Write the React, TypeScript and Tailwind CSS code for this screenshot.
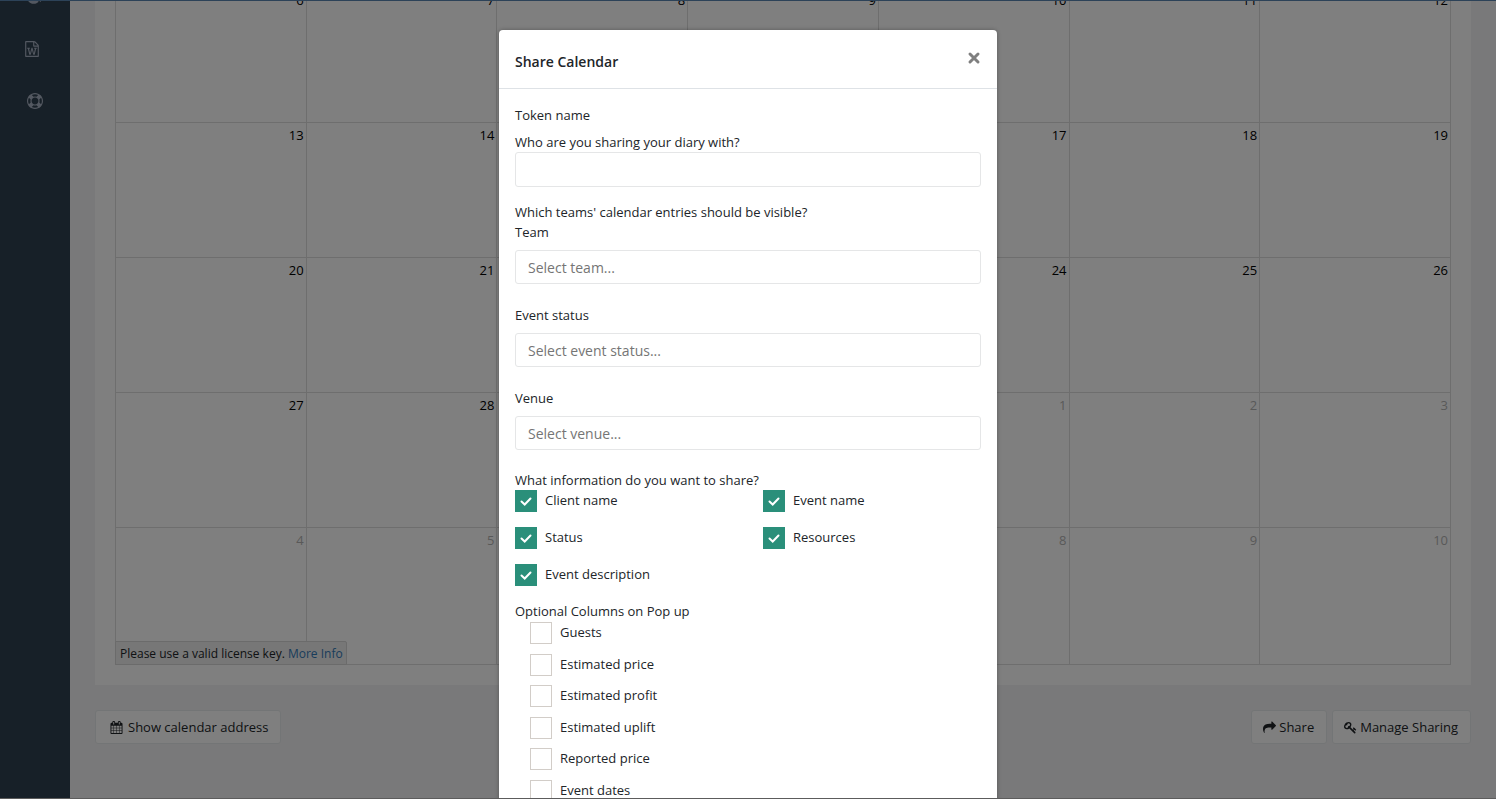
import { useState } from "react";
import type { ReactNode } from "react";

const ICONS = {
  fileWord:
    "M1596 380q28 28 48 76t20 88v1152q0 40-28 68t-68 28h-1344q-40 0-68-28t-28-68v-1600q0-40 28-68t68-28h896q40 0 88 20t76 48zm-444-244v376h376q-10-29-22-41l-313-313q-12-12-41-22zm384 1528v-1024h-416q-40 0-68-28t-28-68v-416h-768v1536h1280zm-1175-896v107h70l164 661h159l128-485q7-20 10-46 2-16 2-24h4l3 24q1 3 3.5 20t5.5 26l128 485h159l164-661h70v-107h-300v107h90l-99 438q-5 20-7 46l-2 21h-4l-3-21q-1-5-4-21t-5-25l-144-545h-114l-144 545q-2 9-4.5 24.5t-3.5 21.5l-4 21h-4l-2-21q-2-26-7-46l-99-438h90v-107h-300z",
  lifeRing:
    "M896 0q182 0 348 71t286 191 191 286 71 348-71 348-191 286-286 191-348 71-348-71-286-191-191-286-71-348 71-348 191-286 286-191 348-71zm0 128q-190 0-361 90l194 194q82-28 167-28t167 28l194-194q-171-90-361-90zm-678 1129l194-194q-28-82-28-167t28-167l-194-194q-90 171-90 361t90 361zm678 407q190 0 361-90l-194-194q-82 28-167 28t-167-28l-194 194q171 90 361 90zm0-384q159 0 271.5-112.5t112.5-271.5-112.5-271.5-271.5-112.5-271.5 112.5-112.5 271.5 112.5 271.5 271.5 112.5zm484-217l194 194q90-171 90-361t-90-361l-194 194q28 82 28 167t-28 167z",
  pieChart:
    "M768 890l546 546q-106 108-247.500 168t-298.500 60q-209 0-385.500-103t-279.500-279.500-103-385.500 103-385.500 279.500-279.500 385.500-103v762zm187 6h773q0 157-60 298.500t-168 247.500zm709-128h-768v-768q209 0 385.500 103t279.500 279.500 103 385.500z",
  calendar:
    "M192 1664h288v-288h-288v288zm352 0h320v-288h-320v288zm-352-352h288v-320h-288v320zm352 0h320v-320h-320v320zm-352-384h288v-288h-288v288zm736 736h320v-288h-320v288zm-384-736h320v-288h-320v288zm768 736h288v-288h-288v288zm-384-352h320v-320h-320v320zm-352-864v-288q0-13-9.5-22.5t-22.5-9.5h-64q-13 0-22.5 9.5t-9.5 22.5v288q0 13 9.5 22.5t22.5 9.5h64q13 0 22.5-9.5t9.5-22.5zm736 864h288v-320h-288v320zm-384-384h320v-288h-320v288zm384 0h288v-288h-288v288zm32-480v-288q0-13-9.5-22.5t-22.5-9.5h-64q-13 0-22.5 9.5t-9.5 22.5v288q0 13 9.5 22.5t22.5 9.5h64q13 0 22.5-9.5t9.5-22.5zm384-64v1280q0 52-38 90t-90 38h-1408q-52 0-90-38t-38-90v-1280q0-52 38-90t90-38h128v-96q0-66 47-113t113-47h64q66 0 113 47t47 113v96h384v-96q0-66 47-113t113-47h64q66 0 113 47t47 113v96h128q52 0 90 38t38 90z",
  share:
    "M1792 640q0 26-19 45l-512 512q-19 19-45 19t-45-19-19-45v-256h-224q-98 0-175.5 6t-154 21.500-133 42.500-105.500 69.500-80 101-48.500 138.500-17.500 181q0 55 5 123 0 6 2.500 23.500t2.500 26.500q0 15-8.500 25t-23.500 10q-16 0-28-17-7-9-13-22t-13.500-30-10.500-24q-127-285-127-451 0-199 53-333 162-403 875-403h224v-256q0-26 19-45t45-19 45 19l512 512q19 19 19 45z",
  key: "M832 512q0-80-56-136t-136-56-136 56-56 136q0 42 19 83-41-19-83-19-80 0-136 56t-56 136 56 136 136 56 136-56 56-136q0-42-19-83 41 19 83 19 80 0 136-56t56-136zm851 704q0 17-49 66t-66 49q-9 0-28.500-16t-36.500-33-38.500-40-24.500-26l-96 96 220 220q28 28 28 68 0 42-39 81t-81 39q-40 0-68-28l-671-671q-176 131-365 131-163 0-265.500-102.500t-102.500-265.500q0-160 95-313t248-248 313-95q163 0 265.500 102.500t102.500 265.500q0 189-131 365l355 355 96-96q-3-3-26-24.500t-40-38.500-33-36.500-16-28.500q0-17 49-66t66-49q13 0 23 10 6 6 46 44.500t82 79.500 86.500 86 73 78 28.500 41z",
};

function Icon({ name, className }: { name: keyof typeof ICONS; className: string }) {
  return (
    <svg aria-hidden viewBox="0 0 1792 1792" fill="currentColor" className={className}>
      <path d={ICONS[name]} />
    </svg>
  );
}

type Day = { day: number; other?: boolean };

const WEEKS: Day[][] = [
  [6, 7, 8, 9, 10, 11, 12].map((day) => ({ day })),
  [13, 14, 15, 16, 17, 18, 19].map((day) => ({ day })),
  [20, 21, 22, 23, 24, 25, 26].map((day) => ({ day })),
  [27, 28, 29, 30, 1, 2, 3].map((day) => ({ day, other: day < 10 })),
  [4, 5, 6, 7, 8, 9, 10].map((day) => ({ day, other: true })),
];

const SHARED_INFO = ["Client name", "Event name", "Status", "Resources", "Event description"];

const OPTIONAL_COLUMNS = [
  "Guests",
  "Estimated price",
  "Estimated profit",
  "Estimated uplift",
  "Reported price",
  "Event dates",
];

function Sidebar() {
  return (
    <nav className="w-[70px] flex-shrink-0 overflow-hidden bg-[#2f4050] text-[#a7b1c2]">
      <ul className="-mt-[11px] flex flex-col">
        <li>
          <a href="#reports" aria-label="Reports" className="block h-[52px] pl-[27px]">
            <Icon name="pieChart" className="h-4 w-4" />
          </a>
        </li>
        <li>
          <a href="#documents" aria-label="Documents" className="block h-[52px] pl-6">
            <Icon name="fileWord" className="h-4 w-4" />
          </a>
        </li>
        <li>
          <a href="#support" aria-label="Support" className="block h-[52px] pl-[27px]">
            <Icon name="lifeRing" className="h-4 w-4" />
          </a>
        </li>
      </ul>
    </nav>
  );
}

function CalendarGrid() {
  return (
    <div className="relative">
      <table className="w-full table-fixed border-collapse">
        <tbody>
          {WEEKS.map((week, i) => (
            <tr key={i} className="h-[135px] last:h-[137px]">
              {week.map(({ day, other }) => (
                <td
                  key={day}
                  className={`border border-[#ddd] px-[2px] py-[2px] text-right align-top ${
                    other ? "text-[#b3b3b3]" : "text-black"
                  }`}
                >
                  {day}
                </td>
              ))}
            </tr>
          ))}
        </tbody>
      </table>
      <div className="absolute bottom-0 left-0 rounded-tr-[2px] border border-[#d6d6d6] bg-[#eee] pt-[2px] pr-[3px] pb-px pl-1 text-xs leading-[19px]">
        Please use a valid license key.{" "}
        <a href="#license" className="text-[#337ab7]">
          More Info
        </a>
      </div>
    </div>
  );
}

type ToolButtonProps = {
  icon: keyof typeof ICONS;
  className: string;
  children: ReactNode;
};

function ToolButton({ icon, className, children }: ToolButtonProps) {
  return (
    <button
      type="button"
      className={`flex h-[34px] items-center rounded-[3px] border border-[#e7eaec] bg-white ${className}`}
    >
      <Icon name={icon} className="h-[13px] w-[13px]" />
      {children}
    </button>
  );
}

function CheckBox({ label, defaultChecked }: { label: string; defaultChecked?: boolean }) {
  return (
    <label className="flex items-start gap-2">
      <span className="relative block h-[22px] w-[22px]">
        <input
          type="checkbox"
          defaultChecked={defaultChecked}
          className="peer block h-[22px] w-[22px] appearance-none border border-[#d2cdc8] bg-white checked:border-[#2a8f7a] checked:bg-[#2a8f7a]"
        />
        <svg
          aria-hidden
          viewBox="0 0 22 22"
          className="pointer-events-none absolute inset-0 hidden peer-checked:block"
        >
          <path
            d="M6.500 11.500L9.700 14.500L15.500 8.500"
            fill="none"
            stroke="#fff"
            strokeWidth="2"
            strokeLinecap="round"
          />
        </svg>
      </span>
      {label}
    </label>
  );
}

function SelectField({ id, label, placeholder }: { id: string; label: string; placeholder: string }) {
  return (
    <div className="mb-[21px]">
      <label htmlFor={id} className="mb-2 block">
        {label}
      </label>
      <select
        id={id}
        className="block h-[34px] w-full appearance-none rounded-[3px] border border-[#e5e6e7] bg-white px-3 pt-[2px] text-sm text-[#757575]"
      >
        <option>{placeholder}</option>
      </select>
    </div>
  );
}

function ShareModal({ onClose }: { onClose: () => void }) {
  return (
    <div className="absolute inset-0 overflow-hidden bg-black/50 pt-[30px]">
      <div
        role="dialog"
        aria-labelledby="share-title"
        className="mx-auto w-full max-w-[498px] rounded bg-white shadow-[0_0_4px_rgba(0,0,0,0.3)]"
      >
        <header className="flex items-start justify-between border-b border-[#dee2e6] px-4 pt-[21px] pb-4">
          <h4 id="share-title" className="pt-px text-sm font-semibold">
            Share Calendar
          </h4>
          <button type="button" aria-label="Close" onClick={onClose} className="text-[#7f7f7f]">
            <svg viewBox="0 0 14 14" className="h-[14px] w-[14px]">
              <path
                d="M3 3L11 11M11 3L3 11"
                stroke="currentColor"
                strokeWidth="3"
                strokeLinecap="round"
              />
            </svg>
          </button>
        </header>

        <form className="px-4 pt-4">
          <p className="mb-[7px]">Token name</p>
          <label htmlFor="token-name" className="block">
            Who are you sharing your diary with?
          </label>
          <input
            id="token-name"
            type="text"
            className="mb-[15px] block h-[35px] w-full rounded-[3px] border border-[#e5e6e7] bg-white px-3"
          />

          <p>Which teams' calendar entries should be visible?</p>
          <SelectField id="team" label="Team" placeholder="Select team..." />
          <SelectField id="status" label="Event status" placeholder="Select event status..." />
          <SelectField id="venue" label="Venue" placeholder="Select venue..." />

          <fieldset>
            <legend className="leading-[19px]">What information do you want to share?</legend>
            <div className="grid auto-rows-[37px] grid-cols-2 gap-x-[30px]">
              {SHARED_INFO.map((label) => (
                <CheckBox key={label} label={label} defaultChecked />
              ))}
            </div>
          </fieldset>

          <fieldset>
            <legend className="mb-px">Optional Columns on Pop up</legend>
            <div className="grid h-[189px] grid-rows-6 pl-[15px]">
              {OPTIONAL_COLUMNS.map((label) => (
                <CheckBox key={label} label={label} />
              ))}
            </div>
          </fieldset>
        </form>
      </div>
    </div>
  );
}

export default function App() {
  const [open, setOpen] = useState(true);

  return (
    <div className="relative flex h-screen overflow-hidden border-b border-[#5c5c5c] bg-[#f3f3f4] font-['Open_Sans','Noto_Sans',sans-serif] text-[13px] leading-5 text-[#212529]">
      <Sidebar />
      <main className="min-w-0 flex-1 overflow-hidden px-[25px]">
        <section className="-mt-[13px] bg-white px-5 pb-5">
          <CalendarGrid />
        </section>
        <div className="mt-[25px] flex justify-between">
          <ToolButton icon="calendar" className="gap-[5px] pr-3 pl-[14px]">
            Show calendar address
          </ToolButton>
          <div className="flex gap-[5px]">
            <ToolButton icon="share" className="gap-[3px] pr-3 pl-[11px]">
              Share
            </ToolButton>
            <ToolButton icon="key" className="gap-[3px] pr-3 pl-[11px]">
              Manage Sharing
            </ToolButton>
          </div>
        </div>
      </main>
      {open && <ShareModal onClose={() => setOpen(false)} />}
      <div className="absolute inset-x-0 top-0 h-px bg-[#2c4258]" />
    </div>
  );
}
